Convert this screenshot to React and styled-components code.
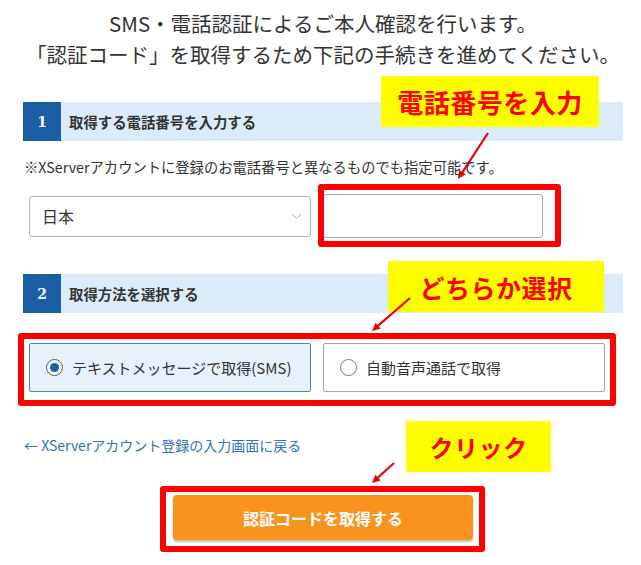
import React from "react";
import styled, { createGlobalStyle } from "styled-components";

const Global = createGlobalStyle`
  html, body { margin: 0; padding: 0; background: #fff; }
  body { font-family: "Noto Sans CJK JP", "Noto Sans", sans-serif; color: #333; }
  * { box-sizing: border-box; }
`;

const Page = styled.div`
  position: relative;
  width: 641px;
  height: 565px;
  padding: 8px 18px 0 23px;
  overflow: hidden;
`;

const Title = styled.h1`
  margin: 0;
  font-size: 20.5px;
  font-weight: 400;
  line-height: 31px;
  text-align: center;
  color: #333;
  letter-spacing: 0;
`;

const SectionHead = styled.div`
  display: flex;
  align-items: stretch;
  height: 39px;
  margin-top: ${(p) => p.$mt}px;
  background: #dcebfa;
`;

const StepNum = styled.div`
  width: 38px;
  display: flex;
  align-items: center;
  justify-content: center;
  background: #1b5ea5;
  color: #fff;
  font-family: "DejaVu Serif", serif;
  font-weight: 700;
  font-size: 14px;
`;

const StepLabel = styled.div`
  display: flex;
  align-items: center;
  padding-left: 8px;
  font-size: 14.4px;
  font-weight: 700;
  color: #333;
`;

const Note = styled.p`
  margin: 16px 0 0 1px;
  font-size: 14.3px;
  line-height: 20px;
  color: #333;
  white-space: nowrap;
`;

const FieldRow = styled.div`
  display: flex;
  align-items: center;
  gap: 12px;
  margin-top: 17px;
  padding-left: 6px;
`;

const SelectBox = styled.div`
  position: relative;
  width: 282px;
  height: 41px;
  border: 1px solid #b3b3b3;
  border-radius: 3px;
  display: flex;
  align-items: center;
  padding-left: 12px;
  font-size: 16px;
  color: #333;
  background: #fff;
`;

const Chevron = styled.svg`
  position: absolute;
  right: 8px;
  top: 16px;
`;

const PhoneInput = styled.input`
  width: 220px;
  height: 44px;
  border: 1px solid #aaa;
  border-radius: 3px;
  background: #fff;
  font-size: 16px;
  padding: 0 10px;
  outline: none;
`;

const OptionRow = styled.div`
  display: flex;
  gap: 12px;
  margin-top: 30px;
  padding-left: 6px;
`;

const Option = styled.label`
  width: 282px;
  height: 49px;
  display: flex;
  align-items: center;
  gap: 9px;
  padding-left: 16px;
  border: 1px solid ${(p) => (p.$checked ? "#4f82bd" : "#a6a6a6")};
  background: ${(p) => (p.$checked ? "#e6f1fb" : "#fff")};
  border-radius: 2px;
  font-size: 15px;
  color: #333;
`;

const Radio = styled.span`
  width: 17px;
  height: 17px;
  border-radius: 50%;
  border: 1.5px solid ${(p) => (p.$checked ? "#555" : "#777")};
  background: #fff;
  display: flex;
  align-items: center;
  justify-content: center;
  flex: none;
  &::after {
    content: "";
    width: 9px;
    height: 9px;
    border-radius: 50%;
    background: ${(p) => (p.$checked ? "#1b5ea5" : "transparent")};
  }
`;

const BackLink = styled.a`
  display: block;
  margin: 43px 0 0 1px;
  font-size: 14px;
  line-height: 20px;
  color: #3571b5;
  text-decoration: none;
`;

const ButtonWrap = styled.div`
  display: flex;
  justify-content: center;
  margin-top: 40px;
`;

const SubmitButton = styled.button`
  width: 300px;
  height: 45px;
  border: none;
  border-radius: 4px;
  background: #f7931e;
  color: #fff;
  font-family: "Noto Sans CJK JP", sans-serif;
  font-size: 16px;
  font-weight: 700;
  box-shadow: 0 2px 2px rgba(0, 0, 0, 0.25);
`;

/* ---- annotations overlaid on the screenshot ---- */
const RedFrame = styled.div`
  position: absolute;
  left: ${(p) => p.$x}px;
  top: ${(p) => p.$y}px;
  width: ${(p) => p.$w}px;
  height: ${(p) => p.$h}px;
  border: 6px solid #ff0000;
  border-radius: 3px;
  pointer-events: none;
`;

const Callout = styled.div`
  position: absolute;
  left: ${(p) => p.$x}px;
  top: ${(p) => p.$y}px;
  width: ${(p) => p.$w}px;
  height: 51px;
  background: #ffff00;
  color: #ff0000;
  display: flex;
  align-items: center;
  justify-content: center;
  font-family: "Noto Sans CJK JP", sans-serif;
  font-size: ${(p) => p.$size}px;
  font-weight: ${(p) => p.$weight};
  letter-spacing: 0.5px;
`;

const ArrowLayer = styled.svg`
  position: absolute;
  left: 0;
  top: 0;
  pointer-events: none;
`;

function Arrow({ x1, y1, x2, y2 }) {
  const a = Math.atan2(y2 - y1, x2 - x1);
  const l = 9;
  const w = 0.45;
  const p1 = [x2 - l * Math.cos(a - w), y2 - l * Math.sin(a - w)];
  const p2 = [x2 - l * Math.cos(a + w), y2 - l * Math.sin(a + w)];
  return (
    <g>
      <line x1={x1} y1={y1} x2={x2 - 4 * Math.cos(a)} y2={y2 - 4 * Math.sin(a)} stroke="#e8000b" strokeWidth="2.2" />
      <polygon points={`${x2},${y2} ${p1[0]},${p1[1]} ${p2[0]},${p2[1]}`} fill="#e8000b" />
    </g>
  );
}

export default function App() {
  return (
    <>
      <Global />
      <Page>
        <Title>
          SMS・電話認証によるご本人確認を行います。
          <br />
          「認証コード」を取得するため下記の手続きを進めてください。
        </Title>

        <SectionHead $mt={32}>
          <StepNum>1</StepNum>
          <StepLabel>取得する電話番号を入力する</StepLabel>
        </SectionHead>
        <Note>※XServerアカウントに登録のお電話番号と異なるものでも指定可能です。</Note>
        <FieldRow>
          <SelectBox>
            日本
            <Chevron width="11" height="7" viewBox="0 0 11 7">
              <polyline points="1,1 5.5,5.5 10,1" fill="none" stroke="#aaa" strokeWidth="1" />
            </Chevron>
          </SelectBox>
          <PhoneInput type="tel" aria-label="電話番号" />
        </FieldRow>

        <SectionHead $mt={36}>
          <StepNum>2</StepNum>
          <StepLabel>取得方法を選択する</StepLabel>
        </SectionHead>
        <OptionRow>
          <Option $checked>
            <Radio $checked />
            テキストメッセージで取得(SMS)
          </Option>
          <Option>
            <Radio />
            自動音声通話で取得
          </Option>
        </OptionRow>

        <BackLink href="#">← XServerアカウント登録の入力画面に戻る</BackLink>

        <ButtonWrap>
          <SubmitButton>認証コードを取得する</SubmitButton>
        </ButtonWrap>

        <RedFrame $x={318} $y={184} $w={243} $h={63} />
        <RedFrame $x={18} $y={333} $w={598} $h={73} />
        <RedFrame $x={160} $y={486} $w={325} $h={66} />

        <Callout $x={381} $y={76} $w={218} $size={26} $weight={700}>電話番号を入力</Callout>
        <Callout $x={388} $y={261} $w={216} $size={25} $weight={600}>どちらか選択</Callout>
        <Callout $x={406} $y={421} $w={145} $size={24} $weight={700}>クリック</Callout>

        <ArrowLayer width="641" height="565" viewBox="0 0 641 565">
          <Arrow x1={488} y1={133} x2={458} y2={179} />
          <Arrow x1={410} y1={298} x2={372} y2={331} />
          <Arrow x1={394} y1={463} x2={372} y2={483} />
        </ArrowLayer>
      </Page>
    </>
  );
}
